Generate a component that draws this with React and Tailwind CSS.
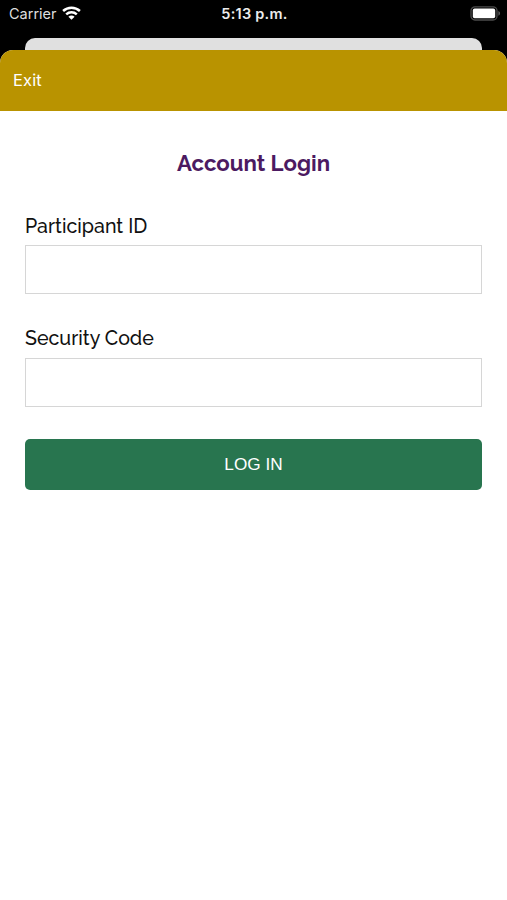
function WifiIcon() {
  return (
    <svg width="19" height="15" viewBox="0 0 19 15" fill="none" stroke="#fff" strokeWidth="2.5">
      <path d="M1.1 5C5.8 0.6 13.2 0.6 17.9 5" />
      <path d="M4.2 8.3C7.2 5.5 11.8 5.5 14.8 8.3" />
      <path d="M9.5 13.8L6.4 10.7C8.2 9.1 10.8 9.1 12.6 10.7Z" fill="#fff" stroke="none" />
    </svg>
  );
}

function BatteryIcon() {
  return (
    <svg width="31" height="15" viewBox="0 0 31 15">
      <rect x="1" y="0.8" width="26" height="13.2" rx="4" fill="none" stroke="#4c4c4c" strokeWidth="1.3" />
      <rect x="2.8" y="2.6" width="22.4" height="9.6" rx="1.8" fill="#fff" />
      <path d="M28.4 5.1C30.6 5.9 30.6 8.9 28.4 9.7Z" fill="#5c5c5c" />
    </svg>
  );
}

function StatusBar() {
  return (
    <div className="grid h-[38px] grid-cols-3 items-start pt-1 pl-[8px] pr-[6px] text-white">
      <div className="flex h-[19px] items-center gap-[5px] pl-[1px]">
        <span className="text-[14.5px] leading-[20px] text-[#dedede]">Carrier</span>
        <WifiIcon />
      </div>
      <div className="text-center text-[14.5px] font-semibold leading-[20px] tracking-[0.25px] text-[#ececec]">
        5:13 p.m.
      </div>
      <div className="flex h-[19px] items-center justify-end">
        <BatteryIcon />
      </div>
    </div>
  );
}

function Field({ id, label, type = 'text' }) {
  return (
    <div className="flex flex-col">
      <label
        htmlFor={id}
        className="h-[31.5px] text-[19.6px] font-medium leading-[25px] text-[#111] font-['Raleway','Lato',sans-serif]"
      >
        {label}
      </label>
      <input id={id} type={type} className="h-[49px] w-full border border-[#d6d6d6] bg-white px-3 outline-none" />
    </div>
  );
}

export default function App() {
  return (
    <div className="flex h-[900px] w-full flex-col overflow-hidden bg-black font-['Inter',sans-serif]">
      <StatusBar />

      {/* Edge of the screen behind the sheet */}
      <div className="mx-[25px] h-3 shrink-0 rounded-t-[10px] bg-[#e0e0e0]" />

      <div className="flex flex-1 flex-col overflow-hidden rounded-t-[13px] bg-white">
        <header className="flex h-[60.5px] shrink-0 items-center bg-[#b99300] px-[13px]">
          <button className="text-[16.5px] tracking-[0.1px] text-white">Exit</button>
        </header>

        <main className="px-[25px] pt-[38px]">
          <h1 className="h-[65px] text-center text-[22.2px] font-bold leading-[28px] text-[#4c1a61] font-['Raleway','Lato',sans-serif]">
            Account Login
          </h1>
          <form className="flex flex-col gap-8" onSubmit={(e) => e.preventDefault()}>
            <Field id="participant-id" label="Participant ID" />
            <Field id="security-code" label="Security Code" type="password" />
            <button className="h-[51.5px] w-full rounded-[5px] bg-[#28754f] pt-[1px] text-[17.2px] text-white font-['Liberation_Sans',sans-serif]">
              LOG IN
            </button>
          </form>
        </main>
      </div>
    </div>
  );
}
